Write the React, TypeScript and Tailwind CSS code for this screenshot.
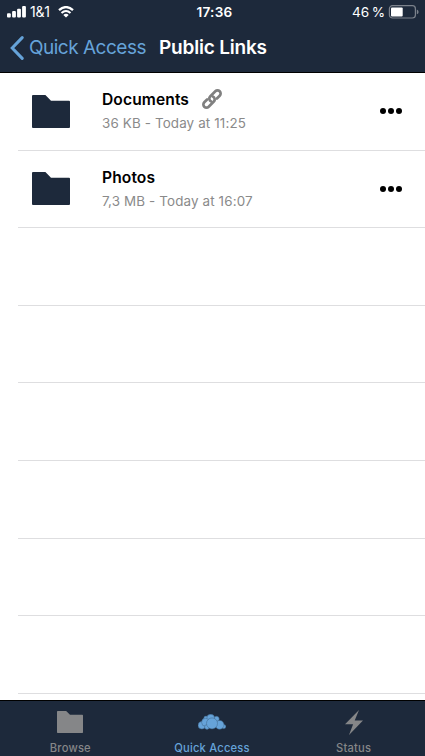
import React from "react";

function FolderIcon({ className }: { className: string }) {
  return (
    <svg viewBox="0 0 38 33" preserveAspectRatio="none" className={className} fill="currentColor">
      <path d="M1 0H13.4L19 5.8H37Q38 5.8 38 6.8V32Q38 33 37 33H1Q0 33 0 32V1Q0 0 1 0Z" />
    </svg>
  );
}

function ChainIcon() {
  return (
    <svg viewBox="-11 -11 22 22" className="ml-3 size-[22px]" fill="none" stroke="#808080" strokeWidth="2.7" strokeLinecap="round">
      <g transform="rotate(-45)">
        <path d="M-3.8-3.1H-7.8A3.1 3.1 0 0 0-7.8 3.1H-.5A3.1 3.1 0 0 0 2.3-1.2" />
        <path d="M3.8 3.1H7.8A3.1 3.1 0 0 0 7.8-3.1H.5A3.1 3.1 0 0 0-2.3 1.2" />
      </g>
    </svg>
  );
}

function StatusBar() {
  return (
    <div className="grid h-[24px] grid-cols-3 items-center text-[13.6px] leading-[24px]">
      <div className="flex items-center pl-[7px]">
        <svg viewBox="0 0 19 12" className="h-3 w-[19px]" fill="white">
          <rect x="0" y="7.2" width="3.8" height="4.3" rx="1" />
          <rect x="5.1" y="5" width="3.8" height="6.5" rx="1" />
          <rect x="10.1" y="2.8" width="3.8" height="8.7" rx="1" />
          <rect x="15.1" y="0" width="3.8" height="11.5" rx="1" />
        </svg>
        <span className="ml-[4px] w-[22px] whitespace-nowrap text-[14px] tracking-[-0.2px]">1&amp;1</span>
        <svg viewBox="0 0 16 12" className="ml-[6px] h-3 w-4" fill="none" stroke="white">
          <path d="M1 4.2Q8-2 15 4.2" strokeWidth="2.3" />
          <path d="M3.5 7Q8 3 12.5 7" strokeWidth="2.1" />
          <path d="M8 11.6L5.3 8.9Q8 6.7 10.7 8.9Z" fill="white" stroke="none" />
        </svg>
      </div>
      <div className="pl-[4px] text-center font-semibold tracking-[0.25px]">17:36</div>
      <div className="flex items-center justify-end pr-[6px]">
        <span className="whitespace-nowrap tracking-[-0.1px] [word-spacing:-1px]">46 %</span>
        <svg viewBox="0 0 31 14" className="ml-[3px] h-[14px] w-[31px]">
          <rect x="1.4" y="0.7" width="26" height="12.3" rx="3" fill="none" stroke="#7c828c" strokeWidth="1.2" />
          <rect x="3" y="2.4" width="11.7" height="9" rx="1" fill="white" />
          <path d="M28.8 4.6Q30.6 5.2 30.6 6.9Q30.6 8.6 28.8 9.2Z" fill="#7c828c" />
        </svg>
      </div>
    </div>
  );
}

function Row({ name, detail, shared }: { name: string; detail: string; shared?: boolean }) {
  return (
    <div className="ml-[18px] flex h-[77.6px] shrink-0 items-center border-b border-[#dedee0] pl-[14px] pr-[23px]">
      <FolderIcon className="h-[33px] w-[38px] text-[#1d293b]" />
      <div className="ml-8 flex-1">
        <div className="flex h-6 items-center">
          <span className="pt-[2px] text-[15.6px] font-semibold leading-6 tracking-[0.1px] text-black">{name}</span>
          {shared && <ChainIcon />}
        </div>
        <div className="h-6 text-[13.4px] leading-6 tracking-[0.14px] text-[#8a8a8a]">{detail}</div>
      </div>
      <div className="flex gap-[2px]">
        <i className="size-[6px] rounded-full bg-black" />
        <i className="size-[6px] rounded-full bg-black" />
        <i className="size-[6px] rounded-full bg-black" />
      </div>
    </div>
  );
}

function CloudIcon() {
  return (
    <svg viewBox="0 0 28 16" className="mr-px h-4 w-7" fill="#66a3d9" stroke="#3f6589" strokeWidth="0.5">
      <circle cx="8" cy="4.3" r="2.2" />
      <circle cx="18.5" cy="5" r="2.7" />
      <circle cx="12.7" cy="4.2" r="3.9" />
      <circle cx="3.9" cy="11.3" r="3.8" />
      <circle cx="7.6" cy="8.3" r="4" />
      <circle cx="25.8" cy="12.6" r="2.1" />
      <circle cx="21.6" cy="10.8" r="4.4" />
      <circle cx="9" cy="13" r="2.4" />
      <circle cx="14" cy="9.4" r="5.5" />
    </svg>
  );
}

function Tab({ label, active, children }: { label: string; active?: boolean; children: React.ReactNode }) {
  return (
    <div className={active ? "flex flex-1 flex-col items-center text-[#66a3d9]" : "flex flex-1 flex-col items-center text-[#858688]"}>
      <div className="flex h-[40px] items-center pt-[2px]">{children}</div>
      <div className="pr-px text-[11.2px] font-medium leading-[14px] tracking-[0.2px]">{label}</div>
    </div>
  );
}

export default function App() {
  return (
    <div className="flex h-[756px] w-[425px] flex-col overflow-hidden bg-white font-['Inter',sans-serif]">
      <header className="h-[73px] shrink-0 border-b border-black bg-[#1d293b] text-white">
        <StatusBar />
        <div className="flex h-[48px] items-center pl-[10px] text-[19px]">
          <svg viewBox="0 0 14 24" className="h-6 w-[14px]" fill="none" stroke="#66a3d9" strokeWidth="3">
            <path d="M12.2 1.6L2.2 12L12.2 22.4" strokeLinecap="round" />
          </svg>
          <span className="ml-[5px] w-[117px] whitespace-nowrap tracking-[-0.5px] text-[#66a3d9]">Quick Access</span>
          <span className="ml-[13px] whitespace-nowrap font-semibold tracking-[-0.2px]">Public Links</span>
        </div>
      </header>
      <main className="flex min-h-0 flex-1 flex-col overflow-hidden">
        <Row name="Documents" detail="36 KB - Today at 11:25" shared />
        <Row name="Photos" detail="7,3 MB - Today at 16:07" />
        {[0, 1, 2, 3, 4, 5].map((n) => (
          <div key={n} className="ml-[18px] h-[77.6px] shrink-0 border-b border-[#dedee0]" />
        ))}
      </main>
      <nav className="flex h-[56px] shrink-0 border-t border-black bg-[#1d293b]">
        <Tab label="Browse">
          <FolderIcon className="mr-px h-[22px] w-[26px]" />
        </Tab>
        <Tab label="Quick Access" active>
          <CloudIcon />
        </Tab>
        <Tab label="Status">
          <svg viewBox="0 0 18 25" className="h-[25px] w-[18px]" fill="currentColor">
            <path d="M14 0L0 14.2H8.1L4 25L18 10.4H9.7Z" />
          </svg>
        </Tab>
      </nav>
    </div>
  );
}
